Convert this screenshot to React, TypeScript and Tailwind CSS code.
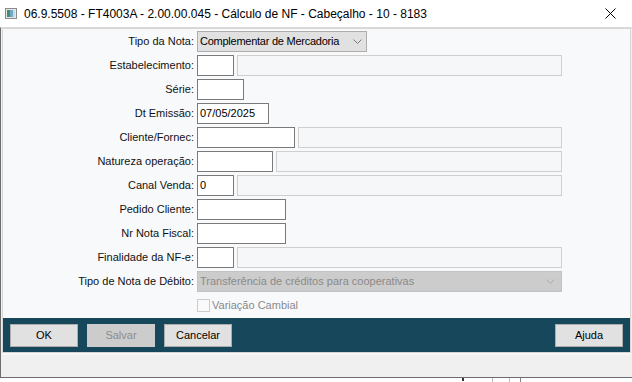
import React from 'react';

const font = { fontFamily: '"Liberation Sans", Arial, sans-serif' };

const Label: React.FC<{ text: string }> = ({ text }) => (
  <div className="w-[191px] mr-[3px] text-right text-[11px] leading-[21px] text-[#111] shrink-0 whitespace-nowrap">{text}</div>
);

const Input: React.FC<{ w: string; value?: string }> = ({ w, value }) => (
  <div className={`${w} h-[21px] bg-white border border-[#7a7a7a] text-[11px] leading-[19px] pl-[2px] text-black shrink-0`}>
    {value}
  </div>
);

const Disabled: React.FC<{ w: string }> = ({ w }) => (
  <div className={`${w} h-[21px] ml-[3px] bg-[#f6f7f8] border border-[#cfcfcf] shrink-0`} />
);

const Chevron: React.FC<{ color: string }> = ({ color }) => (
  <svg width="9" height="6" viewBox="0 0 9 6">
    <path d="M0.5 0.5 L4.5 4.5 L8.5 0.5" fill="none" stroke={color} strokeWidth="1" />
  </svg>
);

const Row: React.FC<{ label: string; children: React.ReactNode }> = ({ label, children }) => (
  <div className="flex items-center h-[21px]">
    <Label text={label} />
    {children}
  </div>
);

const Button: React.FC<{ text: string; disabled?: boolean; className?: string }> = ({ text, disabled, className }) => (
  <div
    className={`w-[68px] h-[23px] flex items-center justify-center text-[11px] border ${
      disabled ? 'bg-[#cccccc] border-[#cccccc] text-[#8d8d8d]' : 'bg-[#e1e1e1] border-[#adadad] text-black'
    } ${className ?? ''}`}
  >
    {text}
  </div>
);

export default function App() {
  return (
    <div className="w-[632px] h-[382px] bg-white overflow-hidden flex flex-col" style={font}>
      {/* title bar */}
      <div className="h-[27px] flex items-center shrink-0">
        <svg className="ml-[5px] mr-[7px]" width="12" height="11" viewBox="0 0 12 11">
          <rect x="0.5" y="0.5" width="11" height="10" fill="#e8e8e8" stroke="#8a8a8a" />
          <rect x="2" y="2" width="3" height="7" fill="#3f8f6a" />
          <rect x="5" y="2" width="3" height="7" fill="#6fa8c8" />
          <rect x="8" y="2" width="2" height="7" fill="#c8d8e4" />
        </svg>
        <span className="text-[12px] text-black">
          06.9.5508 - FT4003A - 2.00.00.045 - Cálculo de NF - Cabeçalho - 10 - 8183
        </span>
        <svg className="ml-auto mr-[16px]" width="11" height="11" viewBox="0 0 11 11">
          <path d="M0.5 0.5 L10.5 10.5 M10.5 0.5 L0.5 10.5" stroke="#000" strokeWidth="1" />
        </svg>
      </div>

      {/* window body */}
      <div className="h-[351px] shrink-0 bg-[#f0f0f0] border-l border-b border-[#6d6d6d] border-t border-t-[#dadada] flex flex-col pl-[1px] pr-[1px]">
        <div className="h-[290px] bg-[#f8f9fb] border border-[#d6d6d6] border-b-0 pt-[2px] flex flex-col gap-[3px]">
          <Row label="Tipo da Nota:">
            <div className="w-[170px] h-[21px] bg-[#e1e1e1] border border-[#adadad] flex items-center pl-[2px] pr-[4px] text-[11px] tracking-[-0.25px] text-black whitespace-nowrap">
              <span>Complementar de Mercadoria</span>
              <span className="ml-auto"><Chevron color="#7a7a7a" /></span>
            </div>
          </Row>
          <Row label="Estabelecimento:">
            <Input w="w-[37px]" />
            <Disabled w="w-[325px]" />
          </Row>
          <Row label="Série:">
            <Input w="w-[47px]" />
          </Row>
          <Row label="Dt Emissão:">
            <Input w="w-[72px]" value="07/05/2025" />
          </Row>
          <Row label="Cliente/Fornec:">
            <Input w="w-[98px]" />
            <Disabled w="w-[264px]" />
          </Row>
          <Row label="Natureza operação:">
            <Input w="w-[76px]" />
            <Disabled w="w-[286px]" />
          </Row>
          <Row label="Canal Venda:">
            <Input w="w-[37px]" value="0" />
            <Disabled w="w-[325px]" />
          </Row>
          <Row label="Pedido Cliente:">
            <Input w="w-[89px]" />
          </Row>
          <Row label="Nr Nota Fiscal:">
            <Input w="w-[89px]" />
          </Row>
          <Row label="Finalidade da NF-e:">
            <Input w="w-[37px]" />
            <Disabled w="w-[325px]" />
          </Row>
          <Row label="Tipo de Nota de Débito:">
            <div className="w-[365px] h-[21px] bg-[#cccccc] border border-[#c2c2c2] flex items-center pl-[2px] pr-[6px] text-[11px] text-[#8a8a8a] whitespace-nowrap">
              <span>Transferência de créditos para cooperativas</span>
              <span className="ml-auto"><Chevron color="#a8a8a8" /></span>
            </div>
          </Row>
          <div className="flex items-center h-[21px]">
            <div className="w-[194px] shrink-0" />
            <div className="w-[13px] h-[13px] border border-[#cccccc] bg-[#fafafa]" />
            <span className="ml-[2px] text-[11px] text-[#8a8a8a]">Variação Cambial</span>
          </div>
        </div>

        {/* footer */}
        <div className="h-[34px] bg-[#17475a] flex items-center pl-[7px] pr-[7px] gap-[9px] border-x border-[#d6d6d6]">
          <Button text="OK" />
          <Button text="Salvar" disabled />
          <Button text="Cancelar" />
          <Button text="Ajuda" className="ml-auto" />
        </div>
        <div className="h-[3px] border-t border-[#d6d6d6] bg-[#f7f7f7]" />
      </div>

      {/* bit of background below window */}
      <div className="flex-1 relative">
        <div className="absolute left-[462px] top-0 w-[2px] h-[3px] bg-[#333]" />
        <div className="absolute left-[492px] top-0 w-[1px] h-[4px] bg-[#bdbdbd]" />
        <div className="absolute left-[509px] top-0 w-[1px] h-[4px] bg-[#bdbdbd]" />
        <div className="absolute left-[520px] top-0 w-[1px] h-[4px] bg-[#888]" />
      </div>
    </div>
  );
}
